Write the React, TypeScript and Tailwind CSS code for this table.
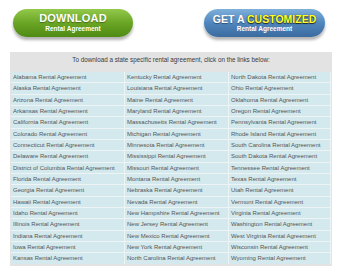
const states: string[] = [
  "Alabama", "Alaska", "Arizona", "Arkansas", "California", "Colorado", "Connecticut",
  "Delaware", "District of Columbia", "Florida", "Georgia", "Hawaii", "Idaho", "Illinois",
  "Indiana", "Iowa", "Kansas",
  "Kentucky", "Louisiana", "Maine", "Maryland", "Massachusetts", "Michigan", "Minnesota",
  "Mississippi", "Missouri", "Montana", "Nebraska", "Nevada", "New Hampshire", "New Jersey",
  "New Mexico", "New York", "North Carolina",
  "North Dakota", "Ohio", "Oklahoma", "Oregon", "Pennsylvania", "Rhode Island",
  "South Carolina", "South Dakota", "Tennessee", "Texas", "Utah", "Vermont", "Virginia",
  "Washington", "West Virginia", "Wisconsin", "Wyoming",
];

const ROWS = 17;

export default function App() {
  // table is filled column by column
  const cells: string[] = [];
  for (let r = 0; r < ROWS; r++) {
    for (let c = 0; c < 3; c++) cells.push(states[c * ROWS + r]);
  }

  return (
    <div className="w-[340px] h-[273px] bg-white overflow-hidden font-['Liberation_Sans',Arial,sans-serif]">
      <div className="flex justify-between pl-[13px] pr-[15px] pt-[9px] h-[52px]">
        <div className="w-[120px] h-[28px] rounded-full bg-gradient-to-b from-[#93c94a] via-[#6aa525] to-[#4f8a14] shadow-[0_3px_3px_rgba(0,0,0,0.3)] flex flex-col items-center justify-center text-white leading-none">
          <span className="text-[11px] font-bold tracking-[0.2px] [text-shadow:0_1px_1px_rgba(0,0,0,0.35)]">DOWNLOAD</span>
          <span className="text-[6.5px] font-bold mt-[2px]">Rental Agreement</span>
        </div>
        <div className="w-[121px] h-[28px] rounded-full bg-gradient-to-b from-[#7eb0db] via-[#4f86bd] to-[#3b6b9f] shadow-[0_3px_3px_rgba(0,0,0,0.3)] flex flex-col items-center justify-center text-white leading-none">
          <span className="text-[10.5px] font-bold [text-shadow:0_1px_1px_rgba(0,0,0,0.4)]">
            GET A <span className="text-[#ffff2e] [text-shadow:0_0_1px_#333,0_1px_1px_#222]">CUSTOMIZED</span>
          </span>
          <span className="text-[6.5px] font-bold mt-[2px]">Rental Agreement</span>
        </div>
      </div>

      <div className="ml-[10px] w-[322px] h-[214px] bg-[#e3e3e3] pt-[1px]">
        <p className="h-[19px] text-center text-[6.3px] text-[#3a3a3a] leading-[14px]">
          To download a state specific rental agreement, click on the links below:
        </p>
        <div className="grid grid-cols-[113px_103px_101px] gap-px mx-[1px] auto-rows-[10.33px] bg-[#eef3f4]">
          {cells.map((s) => (
            <div key={s} className="bg-[#d3e9ed] pl-[2px] text-[6px] leading-[10.33px] text-[#555] whitespace-nowrap overflow-hidden">
              {s} Rental Agreement
            </div>
          ))}
        </div>
      </div>
    </div>
  );
}
